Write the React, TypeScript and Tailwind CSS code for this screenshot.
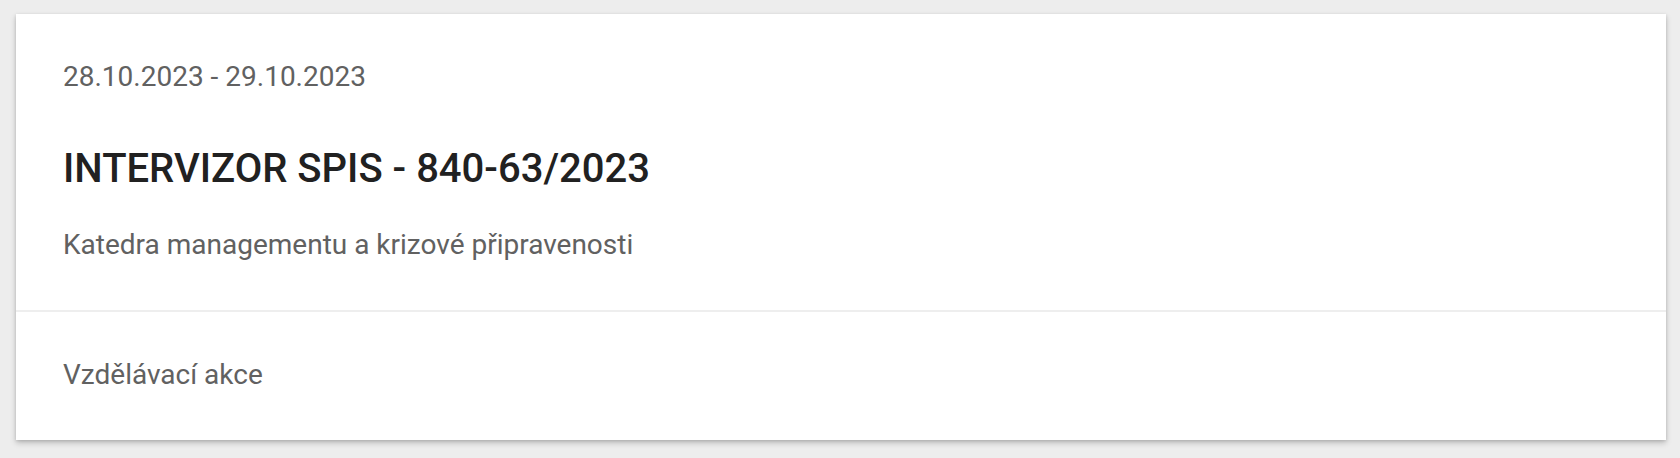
import React from 'react';

export default function App() {
  return (
    <div className="min-h-screen bg-[#ededed] pt-[14px] pl-[16px] pr-[14px] font-['Roboto',sans-serif]">
      <div className="bg-white shadow-[0_3px_6px_rgba(0,0,0,0.2),0_1px_3px_rgba(0,0,0,0.12)]">
        <div className="px-[47px] pt-[42px] pb-[44px] border-b-2 border-[#eeeeee]">
          <div className="text-[28px] leading-[42px] text-[#616161]">28.10.2023 - 29.10.2023</div>
          <h2 className="mt-[43px] text-[40px] leading-[56px] font-medium text-[#212121]">
            INTERVIZOR SPIS - 840-63/2023
          </h2>
          <div className="mt-[27px] text-[28px] leading-[42px] text-[#616161]">
            Katedra managementu a krizové připravenosti
          </div>
        </div>
        <div className="px-[47px] pt-[42px] pb-[44px]">
          <div className="text-[28px] leading-[42px] text-[#616161]">Vzdělávací akce</div>
        </div>
      </div>
    </div>
  );
}
